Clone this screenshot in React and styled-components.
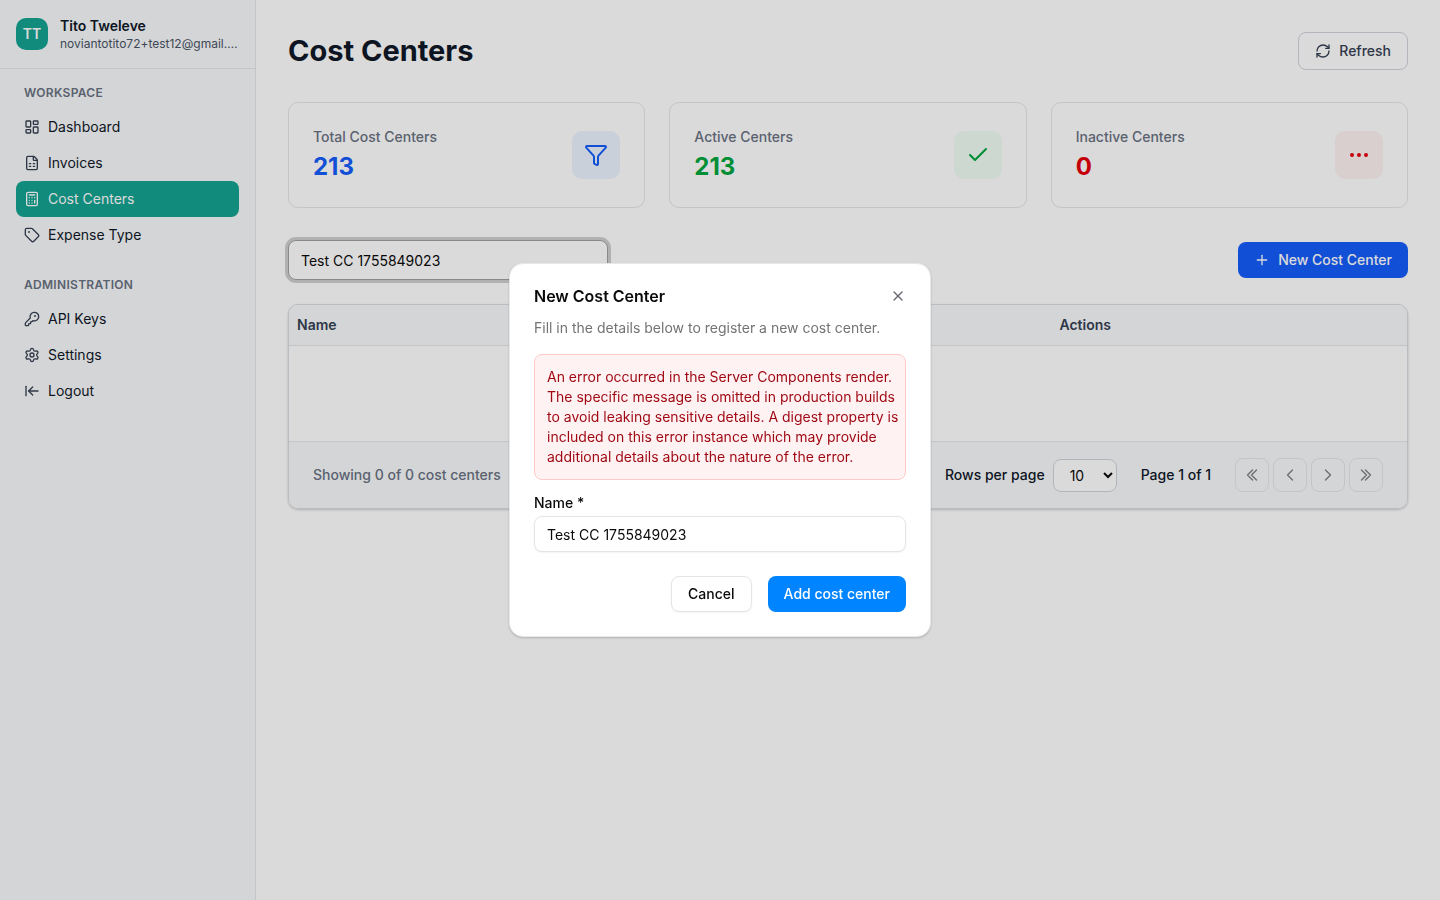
import React from 'react';
import styled, { createGlobalStyle, css } from 'styled-components';
import { LayoutDashboard, FileSpreadsheet, Calculator, Tag, KeyRound, Settings, ArrowLeftToLine, RefreshCw, Plus, Funnel, Check, Ellipsis, X } from 'lucide-react';
import { HiOutlineChevronLeft, HiOutlineChevronRight, HiOutlineChevronDoubleLeft, HiOutlineChevronDoubleRight } from 'react-icons/hi2';

const GlobalStyle = createGlobalStyle`
  *, *::before, *::after { box-sizing: border-box; }
  body {
    margin: 0;
    background: #fff;
    color: #0a0a0a;
    font-family: Inter, "Liberation Sans", sans-serif;
    font-size: 14px;
    line-height: 20px;
    font-optical-sizing: none;
  }
  h1, h2, p { margin: 0; }
  button, input, select { font: inherit; color: inherit; font-optical-sizing: none; }
  a { color: inherit; text-decoration: none; }
`;

const Shell = styled.div`
  display: flex;
  min-height: 100vh;
`;

const Sidebar = styled.aside`
  width: 256px;
  flex: none;
  background: #f8fafc;
  border-right: 1px solid #e5e7eb;
`;

const Profile = styled.div`
  display: flex;
  align-items: center;
  gap: 12px;
  padding: 16px;
  border-bottom: 1px solid #e5e7eb;
`;

const Avatar = styled.div`
  width: 32px;
  height: 32px;
  flex: none;
  display: grid;
  place-items: center;
  border-radius: 10px;
  background: #13a391;
  color: #fff;
  font-weight: 600;
`;

const ProfileText = styled.div`
  min-width: 0;
`;

const ProfileName = styled.div`
  font-weight: 600;
  color: #101828;
`;

const ProfileMail = styled.div`
  font-size: 12px;
  line-height: 16px;
  color: #4a5565;
  overflow: hidden;
  text-overflow: ellipsis;
  white-space: nowrap;
`;

const NavGroup = styled.nav`
  padding: 8px 16px;
`;

const NavHeading = styled.div`
  padding: 0 8px;
  font-size: 12px;
  line-height: 32px;
  font-weight: 600;
  letter-spacing: 0.3px;
  text-transform: uppercase;
  color: #6a7282;
`;

const NavLink = styled.a`
  display: flex;
  align-items: center;
  gap: 8px;
  height: 36px;
  padding: 0 8px;
  border-radius: 8px;
  color: #101828;
  svg { width: 16px; height: 16px; color: #364153; }
  ${(p) => p.$active && css`
    background: #13a391;
    color: #fff;
    svg { color: #fff; }
  `}
`;

const Main = styled.main`
  flex: 1;
  min-width: 0;
  padding: 32px;
`;

const PageHeader = styled.header`
  display: flex;
  align-items: center;
  justify-content: space-between;
  margin-bottom: 32px;
`;

const PageTitle = styled.h1`
  font-size: 29px;
  line-height: 36px;
  font-weight: 700;
  color: #101828;
`;

const Button = styled.button`
  display: inline-flex;
  align-items: center;
  justify-content: center;
  gap: 8px;
  height: 36px;
  padding: 0 16px;
  border: 1px solid #e5e5e5;
  border-radius: 8px;
  background: #fff;
  font-weight: 500;
  svg { width: 16px; height: 16px; }
`;

const RefreshButton = styled(Button)`
  height: 38px;
  border-color: #d1d5dc;
  color: #364153;
`;

const NewButton = styled(Button)`
  border: 0;
  background: #155dfc;
  color: #fff;
`;

const PrimaryButton = styled(Button)`
  border: 0;
  background: #0084ff;
  color: #fff;
`;

const CancelButton = styled(Button)`
  box-shadow: 0 1px 2px rgba(0, 0, 0, 0.05);
`;

const Stats = styled.section`
  display: grid;
  grid-template-columns: repeat(3, 1fr);
  gap: 24px;
  margin-bottom: 32px;
`;

const StatCard = styled.article`
  display: flex;
  align-items: center;
  justify-content: space-between;
  height: 106px;
  padding: 0 24px;
  border: 1px solid #e5e7eb;
  border-radius: 10px;
`;

const StatLabel = styled.div`
  font-weight: 500;
  color: #6a7282;
`;

const StatValue = styled.div`
  margin-top: 4px;
  font-size: 24px;
  line-height: 32px;
  font-weight: 700;
  color: ${(p) => p.$color};
`;

const StatIcon = styled.div`
  width: 48px;
  height: 48px;
  display: grid;
  place-items: center;
  border-radius: 10px;
  background: ${(p) => p.$tint};
  color: ${(p) => p.$color};
  svg { width: 24px; height: 24px; }
`;

const Toolbar = styled.div`
  display: flex;
  align-items: center;
  justify-content: space-between;
  margin-bottom: 24px;
`;

const SearchInput = styled.input`
  width: 320px;
  height: 40px;
  padding: 0 12px;
  border: 1px solid #a1a1a1;
  border-radius: 8px;
  background: #fff;
  outline: none;
  box-shadow: 0 0 0 3px #d0d0d0;
`;

const TableCard = styled.section`
  overflow: hidden;
  border: 1px solid #d9dce1;
  border-radius: 10px;
  box-shadow: 0 1px 3px rgba(0, 0, 0, 0.1), 0 1px 2px rgba(0, 0, 0, 0.1);
`;

const Table = styled.table`
  width: 100%;
  table-layout: fixed;
  border-spacing: 0;
  th {
    height: 41px;
    padding: 0 8px;
    text-align: left;
    font-weight: 600;
    color: #364153;
    background: #f8fafc;
    border-bottom: 1px solid #e5e7eb;
  }
  td { height: 95px; padding: 0; }
`;

const NameColumn = styled.col`
  width: 68.2%;
`;

const TableFooter = styled.footer`
  display: flex;
  align-items: center;
  justify-content: space-between;
  padding: 16px 24px;
  border-top: 1px solid #e5e7eb;
  background: #f8fafc;
  font-weight: 500;
  color: #101828;
`;

const Showing = styled.span`
  color: #6a7282;
`;

const Pagination = styled.div`
  display: flex;
  align-items: center;
  gap: 24px;
`;

const RowsLabel = styled.label`
  display: flex;
  align-items: center;
  gap: 8px;
`;

const RowsSelect = styled.select`
  width: 64px;
  height: 33px;
  padding: 0 0 0 12px;
  border: 1px solid #d1d5dc;
  border-radius: 8px;
  background: #fff;
  font-weight: 400;
  color: #0a0a0a;
`;

const Pager = styled.div`
  display: flex;
  gap: 4px;
`;

const PagerButton = styled.button`
  width: 34px;
  height: 34px;
  display: grid;
  place-items: center;
  padding: 0;
  border: 1px solid #d1d5dc;
  border-radius: 8px;
  background: transparent;
  color: #0a0a0a;
  opacity: 0.5;
  svg { width: 16px; height: 16px; stroke-width: 2; }
`;

const Backdrop = styled.div`
  position: fixed;
  inset: 0;
  display: grid;
  place-items: center;
  padding: 16px;
  background: rgba(0, 0, 0, 0.145);
`;

const Dialog = styled.div`
  width: 100%;
  max-width: 422px;
  padding: 24px;
  border: 1px solid #e8e8e8;
  border-radius: 14px;
  background: #fff;
  box-shadow: 0 1px 3px rgba(0, 0, 0, 0.1), 0 1px 2px rgba(0, 0, 0, 0.1);
`;

const DialogHeader = styled.div`
  display: flex;
  align-items: center;
  justify-content: space-between;
  height: 16px;
`;

const DialogTitle = styled.h2`
  font-size: 16px;
  line-height: 16px;
  font-weight: 600;
`;

const CloseButton = styled.button`
  display: grid;
  place-items: center;
  padding: 0;
  border: 0;
  background: none;
  color: #6b6b75;
  svg { width: 16px; height: 16px; }
`;

const DialogText = styled.p`
  margin: 14px 0 16px;
  color: #737373;
`;

const ErrorBox = styled.p`
  padding: 12px 4px 12px 12px;
  border: 1px solid #ffc9c9;
  border-radius: 8px;
  background: #fef2f2;
  color: #9f0712;
`;

const FieldLabel = styled.label`
  display: block;
  margin: 16px 0 6px;
  line-height: 14px;
  font-weight: 500;
`;

const TextInput = styled.input`
  display: block;
  width: 100%;
  height: 36px;
  padding: 0 12px;
  border: 1px solid #e5e5e5;
  border-radius: 8px;
  background: #fff;
  outline: none;
  box-shadow: 0 1px 2px rgba(0, 0, 0, 0.05);
`;

const DialogActions = styled.div`
  display: flex;
  justify-content: flex-end;
  gap: 16px;
  margin-top: 24px;
`;

const navGroups = [
  { title: 'Workspace', items: [['Dashboard', LayoutDashboard], ['Invoices', FileSpreadsheet], ['Cost Centers', Calculator], ['Expense Type', Tag]] },
  { title: 'Administration', items: [['API Keys', KeyRound], ['Settings', Settings], ['Logout', ArrowLeftToLine]] },
];

const stats = [
  { label: 'Total Cost Centers', value: 213, color: '#155dfc', tint: '#edf4ff', Icon: Funnel },
  { label: 'Active Centers', value: 213, color: '#00a63e', tint: '#f0fdf4', Icon: Check },
  { label: 'Inactive Centers', value: 0, color: '#e7000b', tint: '#fef2f2', Icon: Ellipsis },
];

const pages = [
  ['First page', HiOutlineChevronDoubleLeft],
  ['Previous page', HiOutlineChevronLeft],
  ['Next page', HiOutlineChevronRight],
  ['Last page', HiOutlineChevronDoubleRight],
];

export default function App() {
  return (
    <>
      <GlobalStyle />
      <Shell>
        <Sidebar>
          <Profile>
            <Avatar>TT</Avatar>
            <ProfileText>
              <ProfileName>Tito Tweleve</ProfileName>
              <ProfileMail>noviantotito72+test12@gmail.com</ProfileMail>
            </ProfileText>
          </Profile>
          {navGroups.map((group) => (
            <NavGroup key={group.title} aria-label={group.title}>
              <NavHeading>{group.title}</NavHeading>
              {group.items.map(([label, Icon]) => (
                <NavLink key={label} href="#" $active={label === 'Cost Centers'}>
                  <Icon />
                  {label}
                </NavLink>
              ))}
            </NavGroup>
          ))}
        </Sidebar>
        <Main>
          <PageHeader>
            <PageTitle>Cost Centers</PageTitle>
            <RefreshButton type="button"><RefreshCw />Refresh</RefreshButton>
          </PageHeader>
          <Stats>
            {stats.map(({ label, value, color, tint, Icon }) => (
              <StatCard key={label}>
                <div>
                  <StatLabel>{label}</StatLabel>
                  <StatValue $color={color}>{value}</StatValue>
                </div>
                <StatIcon $color={color} $tint={tint}><Icon /></StatIcon>
              </StatCard>
            ))}
          </Stats>
          <Toolbar>
            <SearchInput aria-label="Search cost centers" defaultValue="Test CC 1755849023" />
            <NewButton type="button"><Plus />New Cost Center</NewButton>
          </Toolbar>
          <TableCard>
            <Table>
              <colgroup><NameColumn /><col /></colgroup>
              <thead><tr><th scope="col">Name</th><th scope="col">Actions</th></tr></thead>
              <tbody><tr><td colSpan={2} /></tr></tbody>
            </Table>
            <TableFooter>
              <Showing>Showing 0 of 0 cost centers</Showing>
              <Pagination>
                <RowsLabel>
                  Rows per page
                  <RowsSelect defaultValue="10"><option>10</option><option>20</option><option>50</option></RowsSelect>
                </RowsLabel>
                <span>Page 1 of 1</span>
                <Pager>
                  {pages.map(([label, Icon]) => (
                    <PagerButton key={label} type="button" aria-label={label} disabled><Icon /></PagerButton>
                  ))}
                </Pager>
              </Pagination>
            </TableFooter>
          </TableCard>
        </Main>
      </Shell>
      <Backdrop>
        <Dialog role="dialog" aria-modal="true" aria-labelledby="dialog-title">
          <DialogHeader>
            <DialogTitle id="dialog-title">New Cost Center</DialogTitle>
            <CloseButton type="button" aria-label="Close"><X /></CloseButton>
          </DialogHeader>
          <DialogText>Fill in the details below to register a new cost center.</DialogText>
          <ErrorBox role="alert">
            An error occurred in the Server Components render. The specific message is omitted in production builds to avoid leaking sensitive details. A digest property is included on this error instance which may provide additional details about the nature of the error.
          </ErrorBox>
          <FieldLabel htmlFor="center-name">Name *</FieldLabel>
          <TextInput id="center-name" defaultValue="Test CC 1755849023" />
          <DialogActions>
            <CancelButton type="button">Cancel</CancelButton>
            <PrimaryButton type="button">Add cost center</PrimaryButton>
          </DialogActions>
        </Dialog>
      </Backdrop>
    </>
  );
}
